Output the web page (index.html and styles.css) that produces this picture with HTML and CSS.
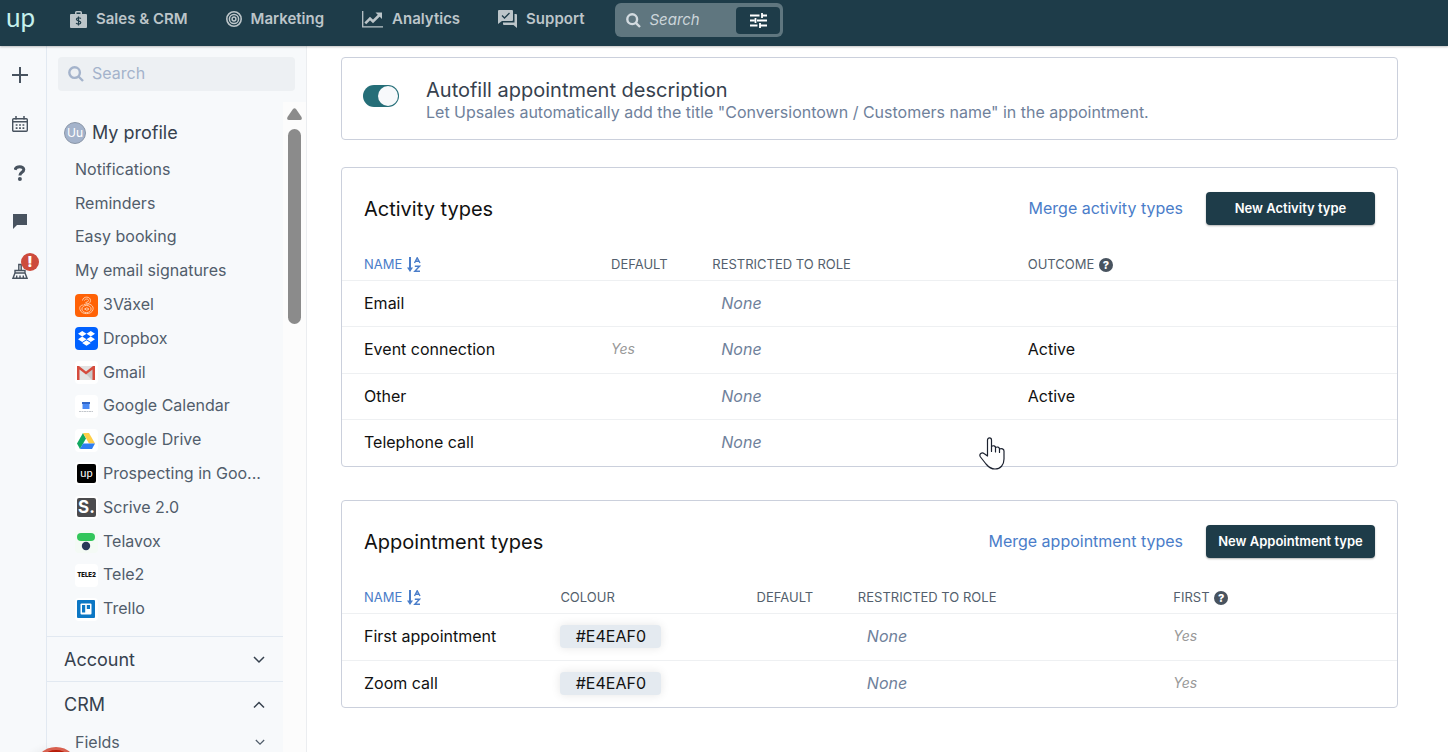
FILE: index.html
```
<!DOCTYPE html>
<html lang="en">

<head>
  <meta charset="UTF-8" />
  <meta name="viewport" content="width=device-width, initial-scale=1.0" />
  <title>Activity types | Upsales</title>
  <link rel="stylesheet" href="styles.css">
</head>

<body>
  <header class="topbar">
    <a href="#" class="logo">up</a>
    <nav class="main-nav">
      <a href="#">
        <svg width="17" height="17" viewBox="0 0 17 17">
          <path fill="currentColor" fill-rule="evenodd" d="M5 3V1.500Q5 0 6.500 0H10.500Q12 0 12 1.500V3H16Q17 3 17 4V16Q17 17 16 17H1Q0 17 0 16V4Q0 3 1 3ZM6.500 3H10.500V1.500H6.500Z" />
          <path fill="none" stroke="#1e3c49" stroke-width="1.200" d="M10.800 7.600C10 6.400 6.400 6.400 6.400 8.300C6.400 10.400 10.800 9.300 10.800 11.500C10.800 13.500 7 13.500 6.100 12M8.500 5.500V14.500" />
        </svg>
        Sales &amp; CRM
      </a>
      <a href="#">
        <svg width="16" height="16" viewBox="0 0 16 16" fill="none" stroke="currentColor">
          <circle cx="8" cy="8" r="7.200" stroke-width="1.600" />
          <circle cx="8" cy="8" r="4.600" stroke-width="1.500" />
          <circle cx="8" cy="8" r="1.900" stroke-width="1.500" />
        </svg>
        Marketing
      </a>
      <a href="#">
        <svg width="21" height="17" viewBox="0 0 21 17" fill="none" stroke="currentColor">
          <path stroke-width="1.300" d="M.700 0V15.800H21" />
          <path stroke-width="2.600" d="M3.300 12.300L8 7.500L11 10.500L17.500 4" />
          <path fill="currentColor" stroke="none" d="M13.500 1.500H20V8Z" />
        </svg>
        Analytics
      </a>
      <a href="#">
        <svg width="19" height="18" viewBox="0 0 19 18">
          <path fill="currentColor" d="M1 0H14Q15 0 15 1V10Q15 11 14 11H4L0 14V1Q0 0 1 0Z" />
          <path fill="currentColor" d="M16.500 4H18Q19 4 19 5V18L15.500 15H6Q5 15 5 14V12.500H16.500Z" />
          <path fill="none" stroke="#1e3c49" stroke-width="1.300" d="M4 5.500L6.500 8L11.500 3" />
        </svg>
        Support
      </a>
    </nav>
    <form class="top-search">
      <svg width="15" height="15" viewBox="0 0 15 15" fill="none" stroke="#d3dbe0" stroke-width="2.400">
        <circle cx="6.200" cy="6.200" r="4.900" />
        <path d="M9.800 9.800L14 14" />
      </svg>
      <input type="search" placeholder="Search" aria-label="Search" />
      <button type="button" aria-label="Filter search">
        <svg width="17" height="15" viewBox="0 0 17 15" fill="none" stroke="#fff" stroke-width="1.800">
          <path d="M0 2.500H9.500M12 2.500H17M12 0V5M0 7.500H4.500M7 7.500H17M5.500 5V10M0 12.500H7.500M10 12.500H17M10 10V15" />
        </svg>
      </button>
    </form>
  </header>

  <div class="layout">
    <div class="rail">
      <button type="button" aria-label="Add">
        <svg width="16" height="16" viewBox="0 0 16 16"><path fill="none" stroke="currentColor" stroke-width="2" d="M8 0V16M0 8H16" /></svg>
      </button>
      <button type="button" aria-label="Calendar">
        <svg width="16" height="16" viewBox="0 0 16 16" fill="none" stroke="currentColor">
          <rect x=".700" y="2.700" width="14.600" height="12.600" rx="1" stroke-width="1.400" />
          <path stroke-width="1.500" d="M4 0V3.500M12 0V3.500M1 5.700H15" />
          <path stroke-width="1.700" stroke-dasharray="1.800 1.600" d="M3.700 9H13M3.700 12.200H13" />
        </svg>
      </button>
      <button type="button" aria-label="Help">
        <svg width="12" height="16" viewBox="0 0 12 16">
          <path fill="none" stroke="currentColor" stroke-width="3" d="M1 4.800C2 .700 9.800 .700 9.800 4.600C9.800 7.500 5.900 7.200 5.900 10.600" />
          <circle cx="5.900" cy="14" r="2" fill="currentColor" />
        </svg>
      </button>
      <button type="button" aria-label="Chat">
        <svg width="14" height="15" viewBox="0 0 14 15"><path fill="currentColor" d="M0 0H14V11H4L0 15Z" /></svg>
      </button>
      <button type="button" aria-label="Clean up data">
        <svg width="16" height="16" viewBox="0 0 16 16" fill="none" stroke="currentColor" stroke-width="1.400">
          <path d="M6.800 7V1.500H9.200V7M3 10V7.500H13V10M3 10H13L15 15.200H1ZM4.700 15V12.500M8 15V12.500M11.300 15V12.500" />
        </svg>
        <span class="alert">!</span>
      </button>
    </div>

    <aside class="sidebar">
      <div class="side-search">
        <svg width="16" height="16" viewBox="0 0 16 16" fill="none" stroke="#a4b3cb" stroke-width="2.400">
          <circle cx="6.600" cy="6.600" r="5.300" />
          <path d="M10.500 10.500L15 15" />
        </svg>
        <input type="search" placeholder="Search" aria-label="Search settings" />
      </div>

      <div class="side-body">
        <div class="side-menu">
          <section class="profile">
            <h2><span class="avatar">Uu</span>My profile</h2>
            <ul>
              <li><a href="#">Notifications</a></li>
              <li><a href="#">Reminders</a></li>
              <li><a href="#">Easy booking</a></li>
              <li><a href="#">My email signatures</a></li>
              <li><a href="#">
                <svg class="app" viewBox="0 0 23 23">
                  <rect width="23" height="23" rx="4" fill="#ff6206" />
                  <g fill="none" stroke="#ffc9a3" stroke-width="1">
                    <path d="M7.500 6.500C8 2 15.500 2 15.500 6.500C15.500 9 13 10.500 11 10M9.500 6.500C10 4.500 13.500 4.500 13.500 6.500Q13 8.500 10.500 8.500" />
                    <path d="M9 10.500C15 8.500 19 12 18 15.500C17 21 6 21 5 15.500" />
                    <ellipse cx="11.500" cy="15" rx="4.600" ry="3.600" />
                    <path d="M5 15.500C4 12.500 6 11 8.500 11M9.500 15Q12 12.500 14 15Q12 17.500 9.500 15" />
                  </g>
                </svg>3Växel</a></li>
              <li><a href="#">
                <svg class="app" viewBox="0 0 23 23">
                  <rect width="23" height="23" rx="4" fill="#0061ff" />
                  <path fill="#fff" d="M3 6.800L7.200 4L11.500 6.800L7.200 9.500ZM11.500 6.800L15.800 4L20 6.800L15.800 9.500ZM3 12.200L7.200 9.500L11.500 12.200L7.200 15ZM11.500 12.200L15.800 9.500L20 12.200L15.800 15ZM7.200 16L11.500 13.200L15.800 16L11.500 18.800Z" />
                </svg>Dropbox</a></li>
              <li><a href="#">
                <svg class="app" viewBox="0 0 23 23">
                  <rect width="23" height="23" rx="4" fill="#fff" />
                  <path fill="#e3e3e3" d="M2 5H20V19H2Z" />
                  <path fill="#c9c9c9" d="M11 13L20 6V19H17Z" />
                  <path fill="#d54b3d" d="M2 5H4L11 10.500L18 5H20V19H17.500V8.500L11 13.500L4.500 8.500V19H2Z" />
                </svg>Gmail</a></li>
              <li><a href="#">
                <svg class="app" viewBox="0 0 23 23">
                  <rect width="23" height="23" rx="4" fill="#fff" />
                  <path fill="#3268c8" d="M7 7H15V9H7Z" />
                  <path fill="#4a8af4" d="M7.500 9H14.500V14H7.500Z" />
                  <path stroke="#c3c7cc" stroke-width="1" stroke-dasharray="2 .500" d="M4 16.500H18" />
                </svg>Google Calendar</a></li>
              <li><a href="#">
                <svg class="app" viewBox="0 0 23 23">
                  <rect width="23" height="23" rx="4" fill="#fff" />
                  <path fill="#11a861" d="M8 4L11 9.500L5 20L2 14.500Z" />
                  <path fill="#ffcf48" d="M8 4H14L20 14.500H14Z" />
                  <path fill="#2f7ef2" d="M8 14.500H20L17 20H5Z" />
                </svg>Google Drive</a></li>
              <li><a href="#"><span class="app tile black">up</span>Prospecting in Goo...</a></li>
              <li><a href="#"><span class="app tile grey">S.</span>Scrive 2.0</a></li>
              <li><a href="#">
                <svg class="app" viewBox="0 0 23 23">
                  <rect width="23" height="23" rx="4" fill="#f4faf5" />
                  <rect x="2" y="3" width="18" height="8" rx="4" fill="#32c65a" />
                  <circle cx="11" cy="16" r="4.200" fill="#28385a" />
                </svg>Telavox</a></li>
              <li><a href="#"><span class="app tile white">TELE2</span>Tele2</a></li>
              <li><a href="#">
                <svg class="app" viewBox="0 0 23 23">
                  <rect width="23" height="23" rx="4" fill="#fff" />
                  <rect x="2" y="2" width="18" height="18" rx="1" fill="#0c77c4" />
                  <rect x="5.500" y="5.500" width="11" height="11" rx="1" fill="#fff" />
                  <path fill="#0c77c4" d="M7 7H10.200V14.500H7ZM11.800 7H15V11H11.800Z" />
                </svg>Trello</a></li>
            </ul>
          </section>
          <button type="button" class="group">
            Account
            <svg width="12" height="8" viewBox="0 0 12 8"><path d="M1 1L6 6L11 1" /></svg>
          </button>
          <button type="button" class="group">
            CRM
            <svg width="12" height="8" viewBox="0 0 12 8"><path d="M1 6.500L6 1.500L11 6.500" /></svg>
          </button>
          <button type="button" class="subgroup">
            Fields
            <svg width="10" height="7" viewBox="0 0 12 8"><path d="M1 1L6 6L11 1" /></svg>
          </button>
        </div>
        <div class="scrollbar">
          <svg width="15" height="12" viewBox="0 0 15 12"><path fill="#8b8b8b" d="M6 1Q7.500 -.500 9 1L14.500 9Q15.500 12 13 12H2Q-.500 12 .500 9Z" /></svg>
          <div class="thumb"></div>
        </div>
      </div>
    </aside>

    <main class="content">
      <section class="card setting">
        <input type="checkbox" id="autofill" class="switch" checked />
        <label for="autofill">
          <span class="setting-title">Autofill appointment description</span>
          <span class="setting-text">Let Upsales automatically add the title "Conversiontown / Customers name" in the appointment.</span>
        </label>
      </section>

      <section class="card">
        <div class="card-head">
          <h1>Activity types</h1>
          <a href="#">Merge activity types</a>
          <button type="button" class="btn">New Activity type</button>
        </div>
        <table class="activities">
          <thead>
            <tr>
              <th class="name sorted">Name
                <svg width="14" height="15" viewBox="0 0 14 15" fill="none" stroke="currentColor">
                  <path stroke-width="2" d="M3 0V12" />
                  <path fill="currentColor" stroke="none" d="M0 10.500H6L3 15Z" />
                  <path stroke-width="1.400" d="M7.500 6L10.200 .800L13 6M8.500 4.300H12M7.800 9.200H12.500L7.800 14.200H13" />
                </svg>
              </th>
              <th class="default">Default</th>
              <th class="role">Restricted to role</th>
              <th>Outcome <span class="help">?</span></th>
            </tr>
          </thead>
          <tbody>
            <tr>
              <td>Email</td>
              <td></td>
              <td class="none">None</td>
              <td></td>
            </tr>
            <tr>
              <td>Event connection</td>
              <td class="yes">Yes</td>
              <td class="none">None</td>
              <td>Active</td>
            </tr>
            <tr>
              <td>Other</td>
              <td></td>
              <td class="none">None</td>
              <td>Active</td>
            </tr>
            <tr>
              <td>Telephone call</td>
              <td></td>
              <td class="none">None</td>
              <td></td>
            </tr>
          </tbody>
        </table>
      </section>

      <section class="card">
        <div class="card-head">
          <h1>Appointment types</h1>
          <a href="#">Merge appointment types</a>
          <button type="button" class="btn">New Appointment type</button>
        </div>
        <table class="appointments">
          <thead>
            <tr>
              <th class="name sorted">Name
                <svg width="14" height="15" viewBox="0 0 14 15" fill="none" stroke="currentColor">
                  <path stroke-width="2" d="M3 0V12" />
                  <path fill="currentColor" stroke="none" d="M0 10.500H6L3 15Z" />
                  <path stroke-width="1.400" d="M7.500 6L10.200 .800L13 6M8.500 4.300H12M7.800 9.200H12.500L7.800 14.200H13" />
                </svg>
              </th>
              <th class="colour">Colour</th>
              <th class="default">Default</th>
              <th class="role">Restricted to role</th>
              <th>First <span class="help">?</span></th>
            </tr>
          </thead>
          <tbody>
            <tr>
              <td>First appointment</td>
              <td><span class="swatch">#E4EAF0</span></td>
              <td></td>
              <td class="none">None</td>
              <td class="yes">Yes</td>
            </tr>
            <tr>
              <td>Zoom call</td>
              <td><span class="swatch">#E4EAF0</span></td>
              <td></td>
              <td class="none">None</td>
              <td class="yes">Yes</td>
            </tr>
          </tbody>
        </table>
      </section>
    </main>
  </div>

  <div class="bubble"></div>
  <svg class="pointer" width="26" height="33" viewBox="0 0 26 33">
    <path fill="#fff" stroke="#1c2230" stroke-width="1.200" stroke-linejoin="round" stroke-linecap="round" d="M8.500 19V3C8.500 .200 12.500 .200 12.500 3V9.500C14 8 16.500 9 16.500 10.500C18 9.500 20.500 10 20.500 12C22.500 11 25 12 25 14V22C25 28 21.500 32 16 32C11.500 32 9.500 30 7 27L1.500 20C-.500 17 3 15 5 16.500Z" />
    <path fill="none" stroke="#1c2230" stroke-width="1.200" stroke-linecap="round" d="M12.500 9.500V14.500M16.500 10.500V15M20.500 12V15.500" />
  </svg>
</body>

</html>
```

FILE: styles.css
```
* {
  box-sizing: border-box;
  margin: 0;
  padding: 0;
}

body {
  height: 100vh;
  display: flex;
  flex-direction: column;
  overflow: hidden;
  background: #fff;
  color: #111;
  font-family: Inter, "Liberation Sans", sans-serif;
  font-size: 16px;
  line-height: 20px;
}

a {
  text-decoration: none;
}

button,
input {
  font: inherit;
  border: none;
  background: none;
}

button {
  cursor: pointer;
}

svg {
  flex-shrink: 0;
}

/* top bar */

.topbar {
  position: relative;
  z-index: 1;
  display: flex;
  align-items: center;
  height: 46px;
  flex-shrink: 0;
  padding: 0 6px 6px;
  background: #1e3c49;
  box-shadow: 0 1px 2px rgba(0, 0, 0, 0.25);
}

.logo {
  width: 64px;
  padding-bottom: 6px;
  color: #c5f0ec;
  font-family: Lato, sans-serif;
  font-size: 26px;
  line-height: 32px;
}

.main-nav {
  display: flex;
  gap: 38px;
  margin-right: 31px;
  padding-bottom: 2px;
}

.main-nav a {
  display: flex;
  align-items: center;
  gap: 9px;
  color: #bcc5c9;
  font-size: 15px;
  font-weight: 600;
  white-space: nowrap;
}

.top-search {
  display: flex;
  align-items: center;
  width: 168px;
  height: 34px;
  padding: 0 3px 0 11px;
  border-radius: 6px;
  background: #5f767f;
}

.top-search input {
  flex: 1;
  min-width: 0;
  padding-left: 8px;
  color: #fff;
  font-size: 15px;
  font-style: italic;
  outline: none;
}

.top-search input::placeholder {
  color: #ccd5da;
}

.top-search button {
  display: flex;
  align-items: center;
  justify-content: center;
  width: 44px;
  height: 27px;
  border-radius: 4px;
  background: #1e3c49;
}

/* left rail */

.layout {
  flex: 1;
  display: flex;
  min-height: 0;
}

.rail {
  width: 47px;
  flex-shrink: 0;
  padding: 4px 6px 0 0;
  display: flex;
  flex-direction: column;
  align-items: center;
  background: #f7f9fb;
  border-right: 1px solid #e2e9f1;
}

.rail button {
  position: relative;
  display: flex;
  align-items: center;
  justify-content: center;
  width: 40px;
  height: 49px;
  color: #48535f;
}

.alert {
  position: absolute;
  top: 7px;
  right: 1px;
  width: 18px;
  height: 18px;
  border-radius: 50%;
  background: #cd4b3c;
  color: #fff;
  font-size: 14px;
  font-weight: 900;
  line-height: 18px;
  text-align: center;
}

/* sidebar */

.sidebar {
  width: 260px;
  flex-shrink: 0;
  display: flex;
  flex-direction: column;
  background: #f7f9fb;
  border-right: 1px solid #ebedf0;
}

.side-search {
  display: flex;
  align-items: center;
  gap: 8px;
  height: 34px;
  flex-shrink: 0;
  margin: 11px;
  padding: 0 10px;
  border-radius: 4px;
  background: #edf0f3;
}

.side-search input {
  flex: 1;
  min-width: 0;
  padding-bottom: 2px;
  color: #4c5866;
  outline: none;
}

.side-search input::placeholder {
  color: #a4b3cb;
}

.side-body {
  flex: 1;
  display: flex;
  min-height: 0;
}

.side-menu {
  flex: 1;
  min-width: 0;
  overflow: hidden;
}

.profile {
  padding: 10px 0 11px;
}

.profile h2 {
  display: flex;
  align-items: center;
  gap: 6px;
  height: 40px;
  padding: 2px 0 0 17px;
  color: #36414e;
  font-size: 18px;
  font-weight: 400;
}

.avatar {
  width: 22px;
  height: 22px;
  border: 1px solid #8b97a8;
  border-radius: 50%;
  background: #a4b3cb;
  color: #fff;
  font-size: 12px;
  line-height: 20px;
  text-align: center;
}

.profile ul {
  display: grid;
  grid-auto-rows: 1fr;
  min-height: 473px;
  list-style: none;
}

.profile li a {
  display: flex;
  align-items: center;
  height: 100%;
  padding-left: 28px;
  color: #515d6b;
  white-space: nowrap;
}

.app {
  width: 23px;
  height: 23px;
  flex-shrink: 0;
  margin: 2px 5px 0 0;
}

.tile {
  border: 2px solid #fff;
  border-radius: 4px;
  color: #fff;
  line-height: 18px;
  text-align: center;
}

.tile.black {
  background: #000;
  font-family: Lato, sans-serif;
  font-size: 11px;
}

.tile.grey {
  background: #4b4b4d;
  font-size: 17px;
  font-weight: 700;
}

.tile.white {
  background: #fff;
  color: #111;
  font-size: 6px;
  font-weight: 900;
}

.group,
.subgroup {
  display: flex;
  align-items: center;
  justify-content: space-between;
  width: 100%;
  padding: 0 18px 0 17px;
}

.group {
  height: 45px;
  padding-top: 2px;
  border-top: 1px solid #e2e9f1;
  color: #36414e;
  font-size: 18px;
}

.subgroup {
  height: 32px;
  padding-left: 28px;
  color: #515d6b;
}

.group svg,
.subgroup svg {
  fill: none;
  stroke: currentColor;
  stroke-width: 1.5;
}

.scrollbar {
  width: 23px;
  flex-shrink: 0;
  display: flex;
  flex-direction: column;
  align-items: center;
  gap: 9px;
  padding-top: 6px;
  background: #fcfcfc;
}

.thumb {
  width: 13px;
  height: 195px;
  border-radius: 7px;
  background: #8b8b8b;
}

/* content */

.content {
  flex: 1;
  min-width: 0;
  padding: 11px 50px 0 34px;
  overflow: hidden;
}

.card {
  margin-bottom: 33px;
  border: 1px solid #cbd0dc;
  border-radius: 4px;
}

.setting {
  display: flex;
  align-items: flex-start;
  gap: 27px;
  margin-bottom: 27px;
  padding: 20px 21px 17px;
}

.switch {
  appearance: none;
  width: 36px;
  height: 22px;
  flex-shrink: 0;
  margin-top: 7px;
  padding: 1px;
  border-radius: 11px;
  background: #a4b3cb;
  cursor: pointer;
}

.switch::before {
  content: "";
  display: block;
  width: 20px;
  height: 20px;
  border-radius: 50%;
  background: #f7f9fb;
}

.switch:checked {
  background: #256e78;
}

.switch:checked::before {
  margin-left: auto;
}

.setting-title,
.setting-text {
  display: block;
}

.setting-title {
  color: #36414e;
  font-size: 20px;
  line-height: 24px;
}

.setting-text {
  color: #6f819b;
}

.card-head {
  display: flex;
  align-items: center;
  gap: 23px;
  padding: 24px 22px 0;
}

.card-head h1 {
  flex: 1;
  font-size: 20px;
  font-weight: 400;
  line-height: 24px;
}

.card-head a {
  padding-bottom: 2px;
  color: #4a7dc9;
}

.btn {
  min-width: 169px;
  height: 33px;
  padding-bottom: 2px;
  border-radius: 4px;
  background: #1e3c49;
  box-shadow: 0 1px 2px rgba(0, 0, 0, 0.3);
  color: #fff;
  font-size: 13px;
  font-weight: 600;
}

table {
  width: 100%;
  table-layout: fixed;
  border-collapse: separate;
  border-spacing: 0;
}

th {
  height: 56px;
  padding-bottom: 8px;
  border-bottom: 1px solid #eef0f2;
  color: #535f6d;
  font-size: 13px;
  font-weight: 400;
  line-height: 16px;
  text-align: left;
  text-transform: uppercase;
  vertical-align: bottom;
  white-space: nowrap;
}

th svg {
  margin-left: 1px;
  vertical-align: -3px;
}

th.sorted {
  color: #4a7dc9;
}

td {
  height: 47px;
  padding-bottom: 2px;
  border-bottom: 1px solid #eef0f2;
}

.activities tr:nth-child(odd) td {
  height: 46px;
}

tr:last-child td {
  height: 46px;
  border-bottom: none;
}

th:first-child,
td:first-child {
  padding-left: 22px;
}

.activities .name {
  width: 25.5%;
}

.appointments .name {
  width: 20.7%;
}

.colour {
  width: 18.6%;
}

.default {
  width: 9.6%;
}

.role {
  width: 29.9%;
}

.none {
  padding-left: 9px;
  color: #6f819b;
  font-style: italic;
}

.yes {
  color: #999;
  font-size: 14px;
  font-style: italic;
}

.help {
  display: inline-block;
  width: 14px;
  height: 14px;
  margin-left: 1px;
  border-radius: 50%;
  background: #48535f;
  color: #fff;
  font-size: 11px;
  font-weight: 800;
  line-height: 14px;
  text-align: center;
}

.swatch {
  display: inline-block;
  width: 101px;
  border-radius: 4px;
  background: #e4eaf0;
  box-shadow: 0 0 10px rgba(0, 0, 0, 0.1);
  line-height: 23px;
  text-align: center;
}

/* floating items */

.bubble {
  position: fixed;
  left: 34px;
  bottom: -39px;
  width: 44px;
  height: 44px;
  border: 3px solid #d8604f;
  border-radius: 50%;
  background: #b81c08;
  box-shadow: -8px 2px 8px rgba(0, 0, 0, 0.06);
}

.pointer {
  position: fixed;
  left: 979px;
  top: 437px;
  pointer-events: none;
}
```
